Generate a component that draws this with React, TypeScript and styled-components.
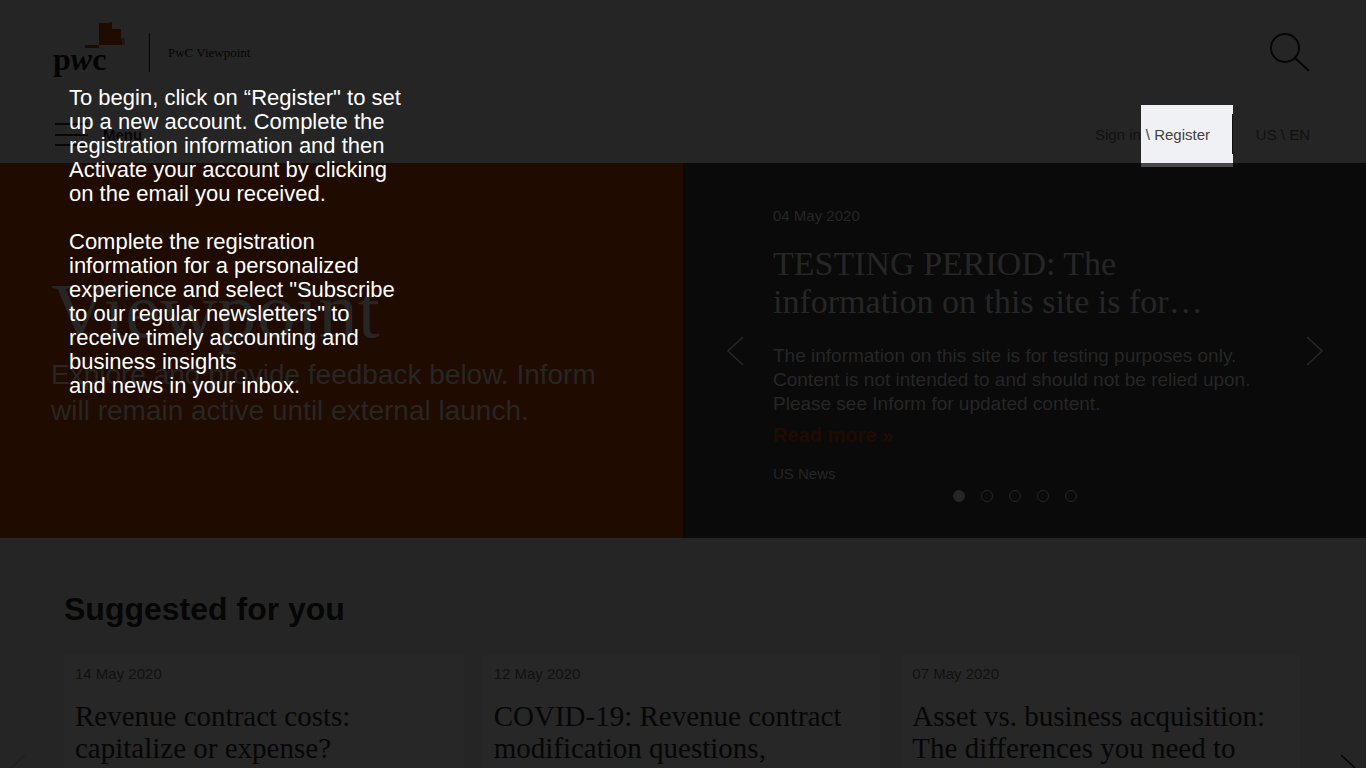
import React from "react";
import styled, { createGlobalStyle } from "styled-components";

const sans = `"Liberation Sans", Arial, sans-serif`;
const serif = `"Liberation Serif", Georgia, serif`;

const color = {
  page: "#252525",
  card: "#272727",
  ink: "#060606",
  faint: "#111111",
  orange: "#200b00",
  dark: "#0a0a0a",
  pale: "#262626",
};

const GlobalStyle = createGlobalStyle`
  *, *::before, *::after { box-sizing: border-box; }
  body {
    margin: 0;
    overflow: hidden;
    background: ${color.page};
    color: ${color.ink};
    font-family: ${sans};
  }
  h1, h2, h3, p { margin: 0; font-weight: 400; }
  a { color: inherit; text-decoration: none; }
  button {
    border: 0;
    padding: 0;
    background: none;
    color: inherit;
    font: inherit;
    cursor: pointer;
  }
  svg { display: block; }
`;

const Page = styled.div`
  position: relative;
  min-height: 100vh;
`;

const TopBar = styled.div`
  display: flex;
  justify-content: space-between;
  align-items: center;
  height: 105px;
  padding: 0 56px 0 52px;
`;

const Brand = styled.a`
  display: flex;
  align-items: center;
  font-family: ${serif};
  font-size: 13px;
`;

const BrandName = styled.span`
  margin-left: 23px;
  padding-left: 18px;
  border-left: 1px solid ${color.ink};
  line-height: 39px;
`;

const NavBar = styled.div`
  display: flex;
  justify-content: space-between;
  height: 58px;
  padding: 0 56px 0 55px;
  font-size: 15px;
`;

const MenuButton = styled.button`
  display: flex;
  align-items: center;
  gap: 15px;
  font-weight: 700;
`;

const Account = styled.nav`
  display: flex;
  align-items: center;
  color: ${color.faint};
`;

const Spotlight = styled.div`
  position: relative;
  display: flex;
  justify-content: space-between;
  align-items: center;
  align-self: stretch;
  width: 92px;
  padding-left: 5px;
  margin-right: 23px;
  background: #f0f1f4;
  color: #414141;
  &::after {
    content: "";
    position: absolute;
    left: 0;
    right: 0;
    top: 100%;
    height: 4px;
    background: #484848;
  }
`;

const Rule = styled.span`
  width: 1px;
  height: 40px;
  background: #111111;
`;

const Hero = styled.section`
  display: grid;
  grid-template-columns: 1fr 1fr;
  height: 375px;
`;

const Intro = styled.div`
  padding: 102px 51px 0;
  background: ${color.orange};
  color: ${color.pale};
`;

const IntroTitle = styled.h1`
  font: 79px/92px ${serif};
`;

const IntroText = styled.p`
  font-size: 28px;
  line-height: 36px;
`;

const Carousel = styled.div`
  display: flex;
  align-items: center;
  gap: 29px;
  padding: 0 42px 0 43px;
  background: ${color.dark};
  color: ${color.pale};
`;

const Slide = styled.article`
  display: flex;
  flex-direction: column;
  align-self: stretch;
  width: 484px;
  padding-top: 44px;
  margin-right: auto;
`;

const Meta = styled.span`
  font-size: 15px;
  line-height: 18px;
`;

const SlideTitle = styled.h2`
  margin: 20px 0 23px;
  font: 34px/38px ${serif};
`;

const SlideText = styled.p`
  font-size: 19px;
  line-height: 24px;
  white-space: nowrap;
`;

const ReadMore = styled.a`
  margin: 7px 0 18px;
  color: ${color.orange};
  font-size: 20px;
  font-weight: 700;
  line-height: 24px;
`;

const Dots = styled.div`
  display: flex;
  justify-content: center;
  gap: 16px;
  margin-top: 7px;
`;

const Dot = styled.button<{ $active?: boolean }>`
  width: 12px;
  height: 12px;
  border: 1px solid ${color.pale};
  border-radius: 50%;
  background: ${(p) => (p.$active ? color.pale : "transparent")};
`;

const SectionTitle = styled.h2`
  padding: 51px 64px 0;
  font-size: 32px;
  font-weight: 700;
  line-height: 40px;
`;

const Suggested = styled.div`
  display: grid;
  grid-template-columns: 64px 1fr 66px;
  align-items: center;
  margin-top: 26px;
`;

const Cards = styled.div`
  display: grid;
  grid-template-columns: repeat(3, 1fr);
  gap: 20px;
`;

const Card = styled.article`
  min-height: 228px;
  padding: 10px 11px;
  background: ${color.card};
  color: ${color.faint};
`;

const CardTitle = styled.h3`
  margin-top: 17px;
  color: ${color.ink};
  font: 29px/32px ${serif};
`;

const Step = styled.button<{ $side: "start" | "end" }>`
  justify-self: ${(p) => p.$side};
  margin: 0 8px;
  color: ${(p) => (p.$side === "start" ? "#202020" : color.ink)};
`;

const Guide = styled.div`
  position: absolute;
  top: 86px;
  left: 69px;
  width: 340px;
  color: #ffffff;
  font-size: 22px;
  line-height: 24px;
  p + p { margin-top: 24px; }
`;

const Logo = () => (
  <svg width="74" height="61" viewBox="0 0 74 61" role="img" aria-label="pwc">
    <path d="M69 16h4v7h-4z" fill="#1a1a1a" />
    <path d="M47 1h11V0h2v7h9v10h1v6H47z" fill={color.orange} />
    <path d="M33 23h14v3H33z" fill={color.orange} />
    <text y="48" x="1" fontFamily="Liberation Serif, serif" fontSize="32" fontWeight="700" fill="#030303">
      p<tspan fontStyle="italic">w</tspan>c
    </text>
  </svg>
);

const Chevron = ({ left = false }: { left?: boolean }) => (
  <svg width="18" height="30" viewBox="0 0 18 30" fill="none" stroke="currentColor" strokeWidth="1.6">
    <path d={left ? "M17 1L2 15l15 14" : "M1 1l15 14L1 29"} />
  </svg>
);

const cards = [
  { date: "14 May 2020", title: ["Revenue contract costs:", "capitalize or expense?"] },
  { date: "12 May 2020", title: ["COVID-19: Revenue contract", "modification questions,"] },
  { date: "07 May 2020", title: ["Asset vs. business acquisition:", "The differences you need to"] },
];

export default function App() {
  return (
    <Page>
      <GlobalStyle />
      <header>
        <TopBar>
          <Brand href="#">
            <Logo />
            <BrandName>PwC Viewpoint</BrandName>
          </Brand>
          <button aria-label="Search">
            <svg width="41" height="40" viewBox="0 0 41 40" fill="none" stroke={color.ink} strokeWidth="2">
              <circle cx="16" cy="15" r="14" />
              <path d="M26 25l14 13" />
            </svg>
          </button>
        </TopBar>
        <NavBar>
          <MenuButton>
            <svg width="33" height="24" viewBox="0 0 33 24" stroke={color.ink} strokeWidth="2">
              <path d="M0 2h33M0 13h33M0 23h33" />
            </svg>
            Menu
          </MenuButton>
          <Account aria-label="Account">
            <a href="#">Sign in</a>
            <Spotlight>
              <span>
                \ <a href="#">Register</a>
              </span>
              <Rule />
            </Spotlight>
            <a href="#">US \ EN</a>
          </Account>
        </NavBar>
      </header>
      <Hero>
        <Intro>
          <IntroTitle>Viewpoint</IntroTitle>
          <IntroText>
            Explore and provide feedback below. Inform
            <br />
            will remain active until external launch.
          </IntroText>
        </Intro>
        <Carousel>
          <button aria-label="Previous slide">
            <Chevron left />
          </button>
          <Slide>
            <Meta>04 May 2020</Meta>
            <SlideTitle>
              TESTING PERIOD: The
              <br />
              information on this site is for…
            </SlideTitle>
            <SlideText>
              The information on this site is for testing purposes only.
              <br />
              Content is not intended to and should not be relied upon.
              <br />
              Please see Inform for updated content.
            </SlideText>
            <ReadMore href="#">Read more »</ReadMore>
            <Meta>US News</Meta>
            <Dots>
              {[1, 2, 3, 4, 5].map((n) => (
                <Dot key={n} $active={n === 1} aria-label={`Slide ${n}`} />
              ))}
            </Dots>
          </Slide>
          <button aria-label="Next slide">
            <Chevron />
          </button>
        </Carousel>
      </Hero>
      <section>
        <SectionTitle>Suggested for you</SectionTitle>
        <Suggested>
          <Step $side="start" aria-label="Previous articles">
            <Chevron left />
          </Step>
          <Cards>
            {cards.map((c) => (
              <Card key={c.date}>
                <Meta>{c.date}</Meta>
                <CardTitle>
                  {c.title[0]}
                  <br />
                  {c.title[1]}
                </CardTitle>
              </Card>
            ))}
          </Cards>
          <Step $side="end" aria-label="Next articles">
            <Chevron />
          </Step>
        </Suggested>
      </section>
      <Guide>
        <p>
          To begin, click on “Register" to set up a new account. Complete the registration information and then
          Activate your account by clicking on the email you received.
        </p>
        <p>
          Complete the registration information for a personalized experience and select "Subscribe to our regular
          newsletters" to receive timely accounting and business insights
          <br />
          and news in your inbox.
        </p>
      </Guide>
    </Page>
  );
}
